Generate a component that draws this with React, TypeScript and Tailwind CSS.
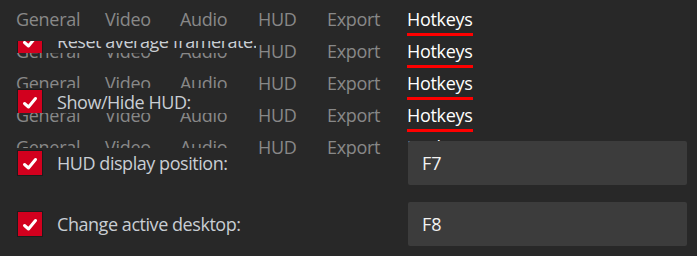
import React from "react";

const FONT = { fontFamily: '"Open Sans", "Noto Sans", sans-serif' };

function TabBar({ className }: { className: string }) {
  return (
    <div className={"flex h-[41px] items-start pt-[7px] text-[18px] leading-[24px] tracking-[-0.3px] " + className}>
      <div className="w-[89px] shrink-0 pl-4 text-[#888888]">General</div>
      <div className="w-[75px] shrink-0 pl-4 text-[#888888]">Video</div>
      <div className="w-[78px] shrink-0 pl-4 text-[#888888]">Audio</div>
      <div className="w-[69px] shrink-0 pl-4 text-[#888888]">HUD</div>
      <div className="w-[80px] shrink-0 pl-4 text-[#888888]">Export</div>
      <div className="shrink-0 pl-4">
        <div className="flex flex-col">
          <span className="text-white">Hotkeys</span>
          <div className="mt-[2px] h-[3px] w-full bg-[#ff0000]" />
        </div>
      </div>
    </div>
  );
}

function Check() {
  return (
    <div className="flex h-[26px] w-[26px] shrink-0 items-center justify-center border border-[#1c1c1c] bg-[#d2001e]">
      <svg width="24" height="24" viewBox="0 0 24 24">
        <path d="M6.5 13.5 L10.5 17 L17.5 8.5" fill="none" stroke="#ffffff" strokeWidth="3" strokeLinecap="round" strokeLinejoin="round" />
      </svg>
    </div>
  );
}

function Row({ label, value }: { label: string; value?: string }) {
  return (
    <div className="flex h-[44px] items-center">
      <div className="flex w-[408px] shrink-0 items-center pl-[17px]">
        <Check />
        <span className="ml-[14px] whitespace-nowrap text-[18px] leading-[24px] tracking-[-0.45px] text-[#c9ced4]">{label}</span>
      </div>
      {value !== undefined && (
        <div className="flex h-[44px] w-[279px] items-center rounded-[2px] bg-[#3c3c3c] pl-[14px] text-[18px] leading-[24px] text-[#f2f2f2]">
          {value}
        </div>
      )}
    </div>
  );
}

export default function App() {
  return (
    <div className="relative h-[256px] w-[697px] overflow-hidden bg-[#282828]" style={FONT}>
      <TabBar className="absolute left-0 top-0" />
      <TabBar className="absolute left-0 top-[32px]" />
      <TabBar className="absolute left-0 top-[64px]" />
      <TabBar className="absolute left-0 top-[96px]" />
      <TabBar className="absolute left-0 top-[128px]" />

      {/* partially repainted row strips */}
      <div className="absolute left-0 top-[41px] h-[12px] w-[256px] overflow-hidden bg-[#282828]">
        <div className="-mt-[22px]">
          <Row label="Reset average framerate:" />
        </div>
      </div>
      <div className="absolute left-0 top-[88px] h-[25px] w-[256px] overflow-hidden bg-[#282828]">
        <div className="-mt-[8px]">
          <Row label="Show/Hide HUD:" />
        </div>
      </div>

      {/* lower repainted area */}
      <div className="absolute left-0 top-[148px] bottom-0 w-[256px] bg-[#282828]" />
      <div className="absolute left-[256px] right-0 top-[157px] bottom-0 bg-[#282828]" />
      <div className="absolute left-0 right-0 top-[141px] flex flex-col gap-[17px]">
        <Row label="HUD display position:" value="F7" />
        <Row label="Change active desktop:" value="F8" />
      </div>
    </div>
  );
}
